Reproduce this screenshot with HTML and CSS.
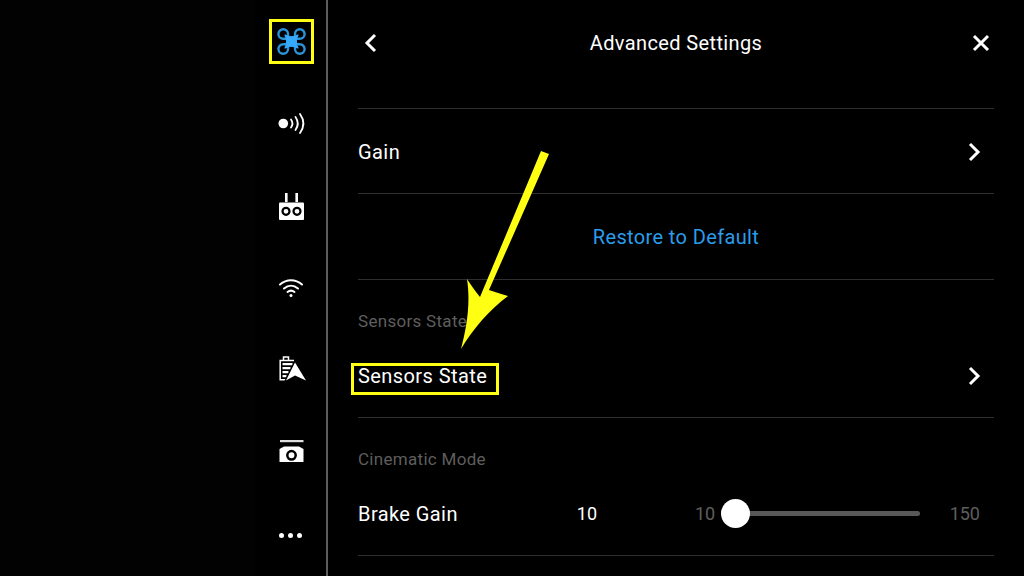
FILE: index.html
```html
<!DOCTYPE html>
<html lang="en">
<head>
  <meta charset="UTF-8"/>
  <title>Advanced Settings</title>
  <link rel="stylesheet" href="styles.css">
</head>
<body>
  <div class="screen">
    <div class="map-side"></div>

    <!-- SIDEBAR -->
    <div class="sidebar">
      <div class="side-icon">
        <svg width="40" height="40" viewBox="0 0 40 40" fill="none" stroke="#2b93d8" stroke-width="2.400" stroke-linecap="round">
          <path d="M17 15V13A4.800 4.800 0 1 0 12.200 17.800H15"/>
          <path d="M24 15V13A4.800 4.800 0 1 1 28.800 17.800H26"/>
          <path d="M17 26V28A4.800 4.800 0 1 1 12.200 23.200H15"/>
          <path d="M24 26V28A4.800 4.800 0 1 0 28.800 23.200H26"/>
          <path d="M14 14Q20.500 17.500 27 14 23.500 20.500 27 27 20.500 23.500 14 27 17.500 20.500 14 14Z" fill="#35a9fb" stroke="#35a9fb" stroke-width="1.200" stroke-linejoin="round"/>
        </svg>
      </div>
      <div class="side-icon">
        <svg width="40" height="40" viewBox="0 0 40 40" fill="none" stroke="#fff" stroke-width="1.800" stroke-linecap="round">
          <circle cx="12.300" cy="20.500" r="4.800" fill="#fff" stroke="none"/>
          <path d="M20 16.500C21.800 19 21.800 22 20 24.500"/>
          <path d="M24.500 14C27.300 18 27.300 23 24.500 27"/>
          <path d="M29 11C33.300 17 33.300 24 29 30"/>
        </svg>
      </div>
      <div class="side-icon">
        <svg width="40" height="40" viewBox="0 0 40 40">
          <path d="M14 7h2.600v9H14zM24.400 7H27v9h-2.600z" fill="#fff"/>
          <rect x="8" y="16.500" width="25" height="17.500" rx="1" fill="#fff"/>
          <circle cx="15" cy="25.300" r="3.500" fill="none" stroke="#000" stroke-width="2.200"/>
          <circle cx="26" cy="25.300" r="3.500" fill="none" stroke="#000" stroke-width="2.200"/>
        </svg>
      </div>
      <div class="side-icon">
        <svg width="26" height="20" viewBox="0 0 26 20" fill="none" stroke="#fff" stroke-width="2" stroke-linecap="round">
          <path d="M2 6.500C8.500.8 17.500.8 24 6.500"/>
          <path d="M6 10.500c4.300-3.700 9.700-3.700 14 0"/>
          <path d="M9.500 14c2.200-1.700 4.800-1.700 7 0"/>
          <circle cx="13" cy="17.500" r="1.500" fill="#fff" stroke="none"/>
        </svg>
      </div>
      <div class="side-icon">
        <svg width="40" height="40" viewBox="0 0 40 40">
          <path d="M23 10.500H9.200V29.800H15M12.500 10.500V7H17.500V10.500" fill="none" stroke="#fff" stroke-width="1.500"/>
          <path d="M11.500 13h10v2.200h-10zM11.500 17h8v2.200h-8zM11.500 21h6v2.200h-6zM11.500 25h4v2.200h-4z" fill="#fff"/>
          <path d="M24 12.500 35 30.500 24 25.500 15 30.500Z" fill="#000" stroke="#000" stroke-width="2.400"/>
          <path d="M24 12.500 35 30.500 24 25.500 15 30.500Z" fill="#fff"/>
        </svg>
      </div>
      <div class="side-icon">
        <svg width="40" height="40" viewBox="0 0 40 40">
          <path d="M9 7h23.500v2.200H9z" fill="#ddd"/>
          <path d="M8.500 16 13 13.500h15L32.500 16v13h-24z" fill="#fff"/>
          <circle cx="20.500" cy="22.300" r="4.200" fill="none" stroke="#000" stroke-width="2.500"/>
        </svg>
      </div>
      <div class="side-icon dots">
        <span></span><span></span><span></span>
      </div>
    </div>

    <!-- PANEL -->
    <div class="panel">
      <div class="panel-head">
        <svg class="chev" width="14" height="20" viewBox="0 0 14 20" fill="none" stroke="#fff" stroke-width="3"><path d="M11 2 3 10l8 8"/></svg>
        <div class="title">Advanced Settings</div>
        <svg class="close" width="18" height="18" viewBox="0 0 18 18" fill="none" stroke="#fff" stroke-width="3"><path d="M2 2l14 14M16 2 2 16"/></svg>
      </div>

      <div class="row gain">
        <div class="row-label">Gain</div>
        <svg class="chev" width="14" height="20" viewBox="0 0 14 20" fill="none" stroke="#fff" stroke-width="3"><path d="M3 2l8 8-8 8"/></svg>
      </div>
      <div class="row center"><span class="link">Restore to Default</span></div>

      <div class="caption">Sensors State</div>
      <div class="row short">
        <div class="row-label">Sensors State</div>
        <svg class="chev" width="14" height="20" viewBox="0 0 14 20" fill="none" stroke="#fff" stroke-width="3"><path d="M3 2l8 8-8 8"/></svg>
      </div>

      <div class="caption">Cinematic Mode</div>
      <div class="row short slider-row">
        <div class="row-label">Brake Gain</div>
        <div class="value">10</div>
        <div class="slider">
          <span>10</span>
          <div class="track"><div class="thumb"></div></div>
          <span>150</span>
        </div>
      </div>
    </div>
  </div>

  <!-- annotations on top of the screenshot -->
  <div class="mark mark-drone"></div>
  <div class="mark mark-sensors"></div>
  <svg class="arrow" width="1024" height="576" viewBox="0 0 1024 576">
    <path d="M541 151 549 154 489 290C495 292 501 294 508 296 489 310 473 329 461 349 466 330 471 305 467 279 471 285 475 291 480 297Z" fill="#ffff14"/>
  </svg>
</body>
</html>
```

FILE: styles.css
```css
html, body {
  margin: 0;
  padding: 0;
  background: #000;
}
body {
  width: 1024px;
  height: 576px;
  overflow: hidden;
  position: relative;
  font-family: 'Roboto', sans-serif;
  color: #fff;
}
.screen {
  display: flex;
  height: 576px;
}
.map-side {
  width: 255px;
  background: #020202;
}
/* SIDEBAR */
.sidebar {
  width: 71px;
  box-sizing: border-box;
  padding: 21px 0;
  display: flex;
  flex-direction: column;
  justify-content: space-between;
  align-items: center;
}
.side-icon {
  height: 40px;
  width: 40px;
  display: flex;
  align-items: center;
  justify-content: center;
}
.dots {
  gap: 4px;
  box-sizing: border-box;
  padding-top: 2px;
}
.dots span {
  width: 5px;
  height: 5px;
  border-radius: 50%;
  background: #fff;
}
/* PANEL */
.panel {
  flex: 1;
  border-left: 2px solid #5c5c5c;
  padding: 0 30px;
}
.panel-head {
  height: 108px;
  box-sizing: border-box;
  padding: 0 4px 22px 6px;
  display: flex;
  align-items: center;
  justify-content: space-between;
}
.title {
  font-size: 20px;
  letter-spacing: 0.38px;
  margin-left: 2px;
}
.row {
  height: 85px;
  box-sizing: border-box;
  border-top: 1px solid #2e2e2e;
  display: flex;
  align-items: center;
  justify-content: space-between;
  padding-right: 13px;
}
.row.gain {
  padding-top: 2px;
}
.row.center {
  height: 87px;
  justify-content: center;
  padding-right: 0;
  border-bottom: 1px solid #2e2e2e;
}
.row.short {
  border-top: none;
  border-bottom: 1px solid #2e2e2e;
  height: 82px;
  padding-bottom: 2px;
}
.row.slider-row {
  padding-right: 14px;
}
.row-label {
  font-size: 20px;
  letter-spacing: 0.42px;
}
.link {
  font-size: 20px;
  letter-spacing: 0.37px;
  color: #2b9cea;
}
.caption {
  font-size: 17px;
  letter-spacing: 0.3px;
  color: #5e5e5e;
  height: 56px;
  box-sizing: border-box;
  padding-top: 31px;
  line-height: 20px;
}
.value {
  font-size: 18px;
  margin-left: 119px;
}
.slider {
  display: flex;
  align-items: center;
  margin-left: auto;
  width: 285px;
  font-size: 18px;
  color: #5e5e5e;
}
.track {
  width: 195px;
  height: 5px;
  border-radius: 3px;
  background: #585858;
  margin: 0 30px 0 10px;
  position: relative;
}
.thumb {
  position: absolute;
  left: -4px;
  top: -12px;
  width: 29px;
  height: 29px;
  border-radius: 50%;
  background: #fff;
}
/* ANNOTATIONS */
.mark {
  position: absolute;
  box-sizing: border-box;
  border: 3px solid #ffff14;
}
.mark-drone {
  left: 269px;
  top: 19px;
  width: 45px;
  height: 45px;
}
.mark-sensors {
  left: 351px;
  top: 363px;
  width: 148px;
  height: 32px;
}
.arrow {
  position: absolute;
  left: 0;
  top: 0;
}
```
